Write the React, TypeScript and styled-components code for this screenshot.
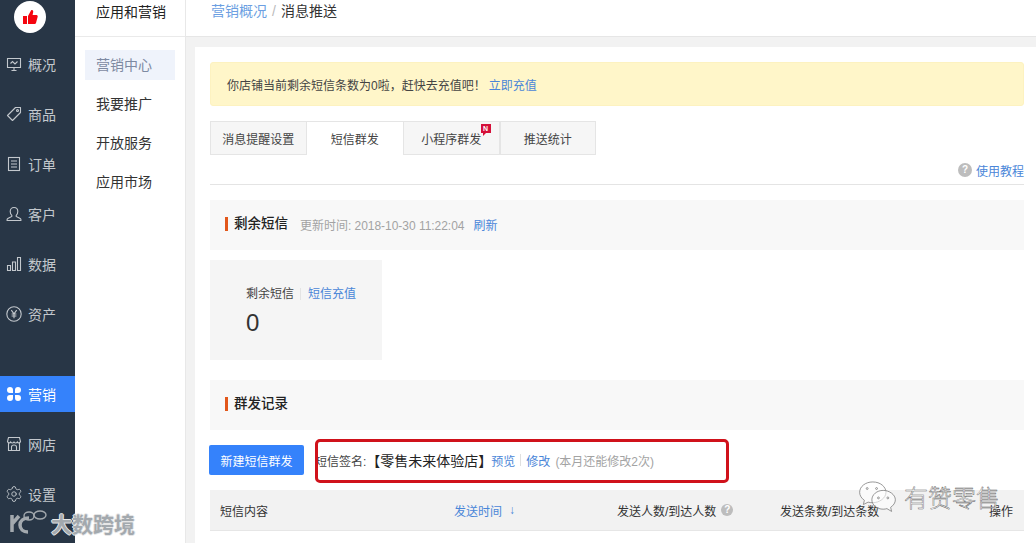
import React from "react";
import styled, { createGlobalStyle } from "styled-components";
import { Settings } from "lucide-react";

const GlobalStyle = createGlobalStyle`
  html, body { margin: 0; padding: 0; background: #fff; }
  body {
    font-family: "Liberation Sans", "Noto Sans CJK SC", sans-serif;
    font-size: 12px;
    color: #333;
    overflow: hidden;
  }
  * { box-sizing: border-box; }
`;

const Page = styled.div`
  position: relative;
  display: flex;
  width: 1036px;
  height: 543px;
  overflow: hidden;
`;

const Sidebar = styled.nav`
  width: 75px;
  flex: none;
  background: #283646;
  display: flex;
  flex-direction: column;
`;

const LogoCircle = styled.div`
  width: 32px;
  height: 32px;
  margin: 1px 0 13px 14px;
  border-radius: 50%;
  background: #fff;
  display: flex;
  align-items: center;
  justify-content: center;
`;

const NavGroup = styled.div<{ $gap?: number }>`
  margin-top: ${(p) => p.$gap ?? 0}px;
  display: flex;
  flex-direction: column;
  gap: 14px;
`;

const NavItem = styled.a<{ $active?: boolean }>`
  height: 36px;
  display: flex;
  align-items: center;
  gap: 6px;
  padding-left: 6px;
  font-size: 14px;
  color: ${(p) => (p.$active ? "#fff" : "#c3c8cd")};
  background: ${(p) => (p.$active ? "#3582fb" : "transparent")};
  svg { flex: none; width: 16px; height: 16px; }
  svg.lucide { width: 18px; height: 18px; margin: 0 -1px; }
`;

const SubNav = styled.aside`
  width: 111px;
  flex: none;
  background: #fff;
  border-right: 1px solid #e8e8e8;
`;

const SubTitle = styled.div`
  height: 37px;
  padding: 4px 0 0 21px;
  font-size: 14px;
  line-height: 16px;
  color: #222;
  border-bottom: 1px solid #eaeaea;
`;

const SubList = styled.div`
  padding: 13px 10px 0;
  display: flex;
  flex-direction: column;
  gap: 9px;
`;

const SubItem = styled.a<{ $active?: boolean }>`
  height: 30px;
  line-height: 30px;
  padding-left: 11px;
  font-size: 14px;
  color: ${(p) => (p.$active ? "#7e8aa2" : "#333")};
  background: ${(p) => (p.$active ? "#eff3fb" : "transparent")};
`;

const Main = styled.main`
  flex: 1;
  min-width: 0;
  display: flex;
  flex-direction: column;
  background: #f2f2f2;
`;

const TopBar = styled.header`
  height: 37px;
  flex: none;
  background: #fff;
  border-bottom: 1px solid #e6e6e6;
  padding: 3px 0 0 25px;
  font-size: 14px;
  line-height: 16px;
  color: #333;
`;

const Crumb = styled.a`
  color: #6c9fe2;
`;

const CrumbSep = styled.span`
  color: #bbb;
  margin: 0 5px;
`;

const Card = styled.section`
  flex: 1;
  margin: 10px 0 0 9px;
  background: #fff;
  padding: 15px 12px 0 15px;
  display: flex;
  flex-direction: column;
`;

const Alert = styled.div`
  height: 44px;
  flex: none;
  display: flex;
  align-items: center;
  gap: 3px;
  padding-left: 16px;
  background: #fff6c9;
  border: 1px solid #fdf2c0;
  border-radius: 3px;
  color: #444;
`;

const Link = styled.a`
  color: #4a86d8;
`;

const Tabs = styled.div`
  margin-top: 15px;
  display: flex;
  height: 34px;
  flex: none;
`;

const TabItem = styled.div<{ $active?: boolean }>`
  position: relative;
  width: 96.5px;
  display: flex;
  align-items: center;
  justify-content: center;
  color: #444;
  background: ${(p) => (p.$active ? "#fff" : "#f6f6f6")};
  border: 1px solid #e5e5e5;
  border-bottom-color: ${(p) => (p.$active ? "#fff" : "#e5e5e5")};
  border-left-width: ${(p) => (p.$active ? 0 : 1)}px;
  border-right-width: ${(p) => (p.$active ? 0 : 1)}px;
`;

const NewBadge = styled.span`
  position: absolute;
  top: 2px;
  right: 8px;
  width: 10px;
  height: 9px;
  background: #d5103a;
  color: #fff;
  font-size: 7px;
  font-weight: 700;
  line-height: 9px;
  text-align: center;
  &::after {
    content: "";
    position: absolute;
    left: 2px;
    top: 9px;
    border-top: 3px solid #d5103a;
    border-right: 3px solid transparent;
  }
`;

const HelpRow = styled.div`
  height: 30px;
  flex: none;
  display: flex;
  align-items: center;
  justify-content: flex-end;
  gap: 4px;
  padding-top: 1px;
  border-bottom: 1px solid #e4e4e4;
`;

const QuestionDot = styled.span<{ $size?: number }>`
  width: ${(p) => p.$size ?? 14}px;
  height: ${(p) => p.$size ?? 14}px;
  border-radius: 50%;
  background: #bdbdbd;
  color: #fff;
  font-size: 10px;
  font-weight: 700;
  line-height: ${(p) => p.$size ?? 14}px;
  text-align: center;
  flex: none;
`;

const SectionHead = styled.div<{ $top: number }>`
  margin-top: ${(p) => p.$top}px;
  height: 50px;
  flex: none;
  display: flex;
  align-items: center;
  padding: 0 0 2px 15px;
  background: #f8f8f8;
`;

const SectionTitle = styled.h3`
  margin: 0;
  padding-left: 6px;
  border-left: 3px solid #e2571b;
  font-size: 13.5px;
  line-height: 14px;
  font-weight: 500;
  color: #222;
`;

const Muted = styled.span`
  color: #a3a3a3;
`;

const UpdateTime = styled(Muted)`
  margin: 0 9px 0 12px;
  letter-spacing: -0.03px;
`;

const Attempts = styled(Muted)`
  margin-left: 5px;
`;

const StatBox = styled.div`
  margin-top: 10px;
  width: 172px;
  height: 100px;
  flex: none;
  background: #f5f5f5;
  padding: 26px 0 0 36px;
`;

const StatLabel = styled.div`
  display: flex;
  align-items: center;
  line-height: 16px;
  color: #444;
`;

const StatDivider = styled.span`
  width: 1px;
  height: 12px;
  margin: 0 7px 0 6px;
  background: #e4e4e4;
`;

const StatValue = styled.div`
  font-size: 24px;
  line-height: 28px;
  margin-top: 7px;
  color: #333;
`;

const ActionRow = styled.div`
  position: relative;
  margin-top: 15px;
  height: 30px;
  flex: none;
  display: flex;
  align-items: center;
`;

const PrimaryButton = styled.button`
  width: 95px;
  height: 30px;
  margin-left: -1px;
  border: 0;
  border-radius: 2px;
  background: #3582fb;
  color: #fff;
  font: inherit;
  padding: 0;
`;

const SignText = styled.div`
  margin-left: 11px;
  display: flex;
  align-items: center;
  color: #444;
`;

const SignName = styled.span`
  font-size: 14px;
  color: #222;
  margin-right: -1px;
`;

const LinkDivider = styled.span`
  width: 1px;
  height: 12px;
  margin: 0 5px;
  background: #e0e0e0;
`;

const RedFrame = styled.div`
  position: absolute;
  left: 105px;
  top: -6px;
  width: 414px;
  height: 44px;
  border: 3px solid #d0121b;
  border-radius: 5px;
`;

const TableHead = styled.div`
  margin-top: 15px;
  height: 41px;
  flex: none;
  display: grid;
  grid-template-columns: 234px 163px 163px 1fr auto;
  align-items: center;
  padding: 0 11px 0 10px;
  background: #f2f2f2;
  border-bottom: 1px solid #e6e6e6;
  color: #333;
`;

const HeadCell = styled.div`
  display: flex;
  align-items: center;
  gap: 5px;
`;

const SortArrow = styled.span`
  margin-left: 2px;
  color: #4a86d8;
  font-size: 12px;
`;

const Watermark = styled.div`
  position: absolute;
  display: flex;
  align-items: center;
`;

const LeftMark = styled(Watermark)`
  left: 9px;
  bottom: 5px;
  gap: 2px;
  font-size: 21px;
  font-weight: 700;
  color: #a3a9ae;
  text-shadow: 1px 0 0 #e6e6e6, -1px 0 0 #e6e6e6, 0 1px 0 #e6e6e6, 0 -1px 0 #e6e6e6;
`;

const RightMark = styled(Watermark)`
  right: 36px;
  bottom: 29px;
  gap: 6px;
  font-size: 24px;
  font-weight: 300;
  color: #fff;
  -webkit-text-stroke: 0.4px #555;
`;

const Thumb = () => (
  <svg width="18" height="18" viewBox="0 0 18 18" fill="#f5050f">
    <rect x="2" y="8" width="4" height="8" />
    <path d="M7 8 L10 2.5 C11 1.5 12.5 2.2 12.2 4 L11.6 7 L15.5 7 C16.5 7 17 8 16.6 9 L15 15 C14.8 15.7 14.3 16 13.6 16 L7 16 Z" />
  </svg>
);

const BoardIcon = () => (
  <svg viewBox="0 0 16 16" fill="none" stroke="currentColor" strokeWidth="1.1">
    <path d="M1.500 2.500h13v9h-13zM4.500 7.500l2-2 2.500 2.500 2.500-2.500M8 11.500V14M5.500 14.500h5" />
  </svg>
);

const PriceTagIcon = () => (
  <svg viewBox="0 0 16 16" fill="none" stroke="currentColor" strokeWidth="1.1">
    <path d="M9.500 1.500h5v5l-8 8-5-5z" strokeLinejoin="round" />
    <circle cx="11.500" cy="4.500" r="1" />
  </svg>
);

const ListIcon = () => (
  <svg viewBox="0 0 16 16" fill="none" stroke="currentColor" strokeWidth="1.1">
    <rect x="2.500" y="1.500" width="11" height="13" />
    <path d="M5 5h6M5 8h6M5 11h6" />
  </svg>
);

const UserIcon = () => (
  <svg viewBox="0 0 16 16" fill="none" stroke="currentColor" strokeWidth="1.1">
    <path d="M5.800 9.300C4.500 8.200 4.200 6.800 4.200 5.500 4.200 3 5.800 1.500 8 1.500s3.800 1.500 3.800 4c0 1.300-.3 2.700-1.600 3.800v1.200l4 2c.5.3.7.6.7 1v1H1.100v-1c0-.4.2-.7.7-1l4-2z" />
  </svg>
);

const BarsIcon = () => (
  <svg viewBox="0 0 16 16" fill="none" stroke="currentColor" strokeWidth="1.1">
    <path d="M1.500 9.500h3v5h-3zM6.500 6h3v8.500h-3zM11.500 1.500h3v13h-3z" />
  </svg>
);

const YenIcon = () => (
  <svg viewBox="0 0 16 16" fill="none" stroke="currentColor" strokeWidth="1.1">
    <circle cx="8" cy="8" r="7.200" />
    <path d="M5.300 4.200 8 7.800l2.700-3.600M8 7.800v4.400M5.600 8h4.800M5.600 10h4.800" />
  </svg>
);

const CloverIcon = () => (
  <svg viewBox="0 0 16 16" fill="#fff">
    <path d="M1 4a3 3 0 0 1 6 0v3H4a3 3 0 0 1-3-3zM9 4a3 3 0 0 1 6 0 3 3 0 0 1-3 3H9zM1 12a3 3 0 0 1 3-3h3v3a3 3 0 0 1-6 0zM9 9h3a3 3 0 0 1 0 6 3 3 0 0 1-3-3z" />
  </svg>
);

const ShopIcon = () => (
  <svg viewBox="0 0 16 16" fill="none" stroke="currentColor" strokeWidth="1.1">
    <path d="M2.500 1.500h11l1 4c-.5 1.500-2.500 2-3.200.5-.8 1.300-2.500 1.300-3.300 0-.8 1.300-2.500 1.300-3.300 0-.7 1.500-2.700 1-3.200-.5zM2.500 7v7.500h11V7M5.500 14.500V11C5.500 9.500 6.500 9 8 9s2.500.5 2.500 2v3.500" />
  </svg>
);

const BrandMark = () => (
  <svg width="40" height="26" viewBox="0 0 40 26" fill="none" stroke="#a3a9ae">
    <path d="M3 5v17M3 14 10 6" strokeWidth="3.500" />
    <path d="M20 8c-6 0-9 3-9 7s3 7 8 7" strokeWidth="3.500" />
    <ellipse cx="20" cy="6" rx="5" ry="4" strokeWidth="1.400" />
    <ellipse cx="31" cy="5" rx="6" ry="4" strokeWidth="1.400" />
  </svg>
);

const WeChatMark = () => (
  <svg width="41" height="31" viewBox="0 0 40 33" fill="#fff" fillOpacity="0.6" stroke="#777" strokeWidth="0.8">
    <path d="M15 1C7 1 1 6 1 12c0 3.500 2 6.500 5 8.500L5 25l5-2.500c1.500.4 3 .6 5 .6 7 0 14-5 14-11S23 1 15 1z" />
    <path d="M26 10c-6.500 0-12 4.500-12 10s5.500 10 12 10c1.500 0 3-.2 4-.6l5 3-1-4.400c3-2 5-4.800 5-8 0-5.500-6.500-10-13-10z" />
    <circle cx="9" cy="8" r="1" />
    <circle cx="19" cy="8" r="1" />
    <circle cx="21" cy="18" r="1" />
    <circle cx="31" cy="18" r="1" />
  </svg>
);

const primaryNav = [
  { label: "概况", icon: <BoardIcon /> },
  { label: "商品", icon: <PriceTagIcon /> },
  { label: "订单", icon: <ListIcon /> },
  { label: "客户", icon: <UserIcon /> },
  { label: "数据", icon: <BarsIcon /> },
  { label: "资产", icon: <YenIcon /> },
];

const secondaryNav = [
  { label: "营销", icon: <CloverIcon />, active: true },
  { label: "网店", icon: <ShopIcon /> },
  { label: "设置", icon: <Settings strokeWidth={1.2} /> },
];

const subItems = ["营销中心", "我要推广", "开放服务", "应用市场"];

export default function App() {
  return (
    <Page>
      <GlobalStyle />
      <Sidebar>
        <LogoCircle>
          <Thumb />
        </LogoCircle>
        <NavGroup>
          {primaryNav.map((item) => (
            <NavItem key={item.label}>
              {item.icon}
              {item.label}
            </NavItem>
          ))}
        </NavGroup>
        <NavGroup $gap={44}>
          {secondaryNav.map((item) => (
            <NavItem key={item.label} $active={item.active}>
              {item.icon}
              {item.label}
            </NavItem>
          ))}
        </NavGroup>
      </Sidebar>

      <SubNav>
        <SubTitle>应用和营销</SubTitle>
        <SubList>
          {subItems.map((label, i) => (
            <SubItem key={label} $active={i === 0}>
              {label}
            </SubItem>
          ))}
        </SubList>
      </SubNav>

      <Main>
        <TopBar>
          <Crumb>营销概况</Crumb>
          <CrumbSep>/</CrumbSep>
          消息推送
        </TopBar>
        <Card>
          <Alert>
            <span>你店铺当前剩余短信条数为0啦，赶快去充值吧！</span>
            <Link>立即充值</Link>
          </Alert>

          <Tabs>
            <TabItem>消息提醒设置</TabItem>
            <TabItem $active>短信群发</TabItem>
            <TabItem>
              小程序群发
              <NewBadge>N</NewBadge>
            </TabItem>
            <TabItem>推送统计</TabItem>
          </Tabs>

          <HelpRow>
            <QuestionDot>?</QuestionDot>
            <Link>使用教程</Link>
          </HelpRow>

          <SectionHead $top={15}>
            <SectionTitle>剩余短信</SectionTitle>
            <UpdateTime>更新时间: 2018-10-30 11:22:04</UpdateTime>
            <Link>刷新</Link>
          </SectionHead>

          <StatBox>
            <StatLabel>
              剩余短信
              <StatDivider />
              <Link>短信充值</Link>
            </StatLabel>
            <StatValue>0</StatValue>
          </StatBox>

          <SectionHead $top={20}>
            <SectionTitle>群发记录</SectionTitle>
          </SectionHead>

          <ActionRow>
            <PrimaryButton>新建短信群发</PrimaryButton>
            <SignText>
              短信签名:
              <SignName>【零售未来体验店】</SignName>
              <Link>预览</Link>
              <LinkDivider />
              <Link>修改</Link>
              <Attempts>(本月还能修改2次)</Attempts>
            </SignText>
            <RedFrame />
          </ActionRow>

          <TableHead>
            <HeadCell>短信内容</HeadCell>
            <HeadCell>
              <Link>发送时间</Link>
              <SortArrow>↓</SortArrow>
            </HeadCell>
            <HeadCell>
              发送人数/到达人数
              <QuestionDot $size={12}>?</QuestionDot>
            </HeadCell>
            <HeadCell>发送条数/到达条数</HeadCell>
            <HeadCell>操作</HeadCell>
          </TableHead>
        </Card>
      </Main>

      <LeftMark>
        <BrandMark />
        大数跨境
      </LeftMark>
      <RightMark>
        <WeChatMark />
        有赞零售
      </RightMark>
    </Page>
  );
}
